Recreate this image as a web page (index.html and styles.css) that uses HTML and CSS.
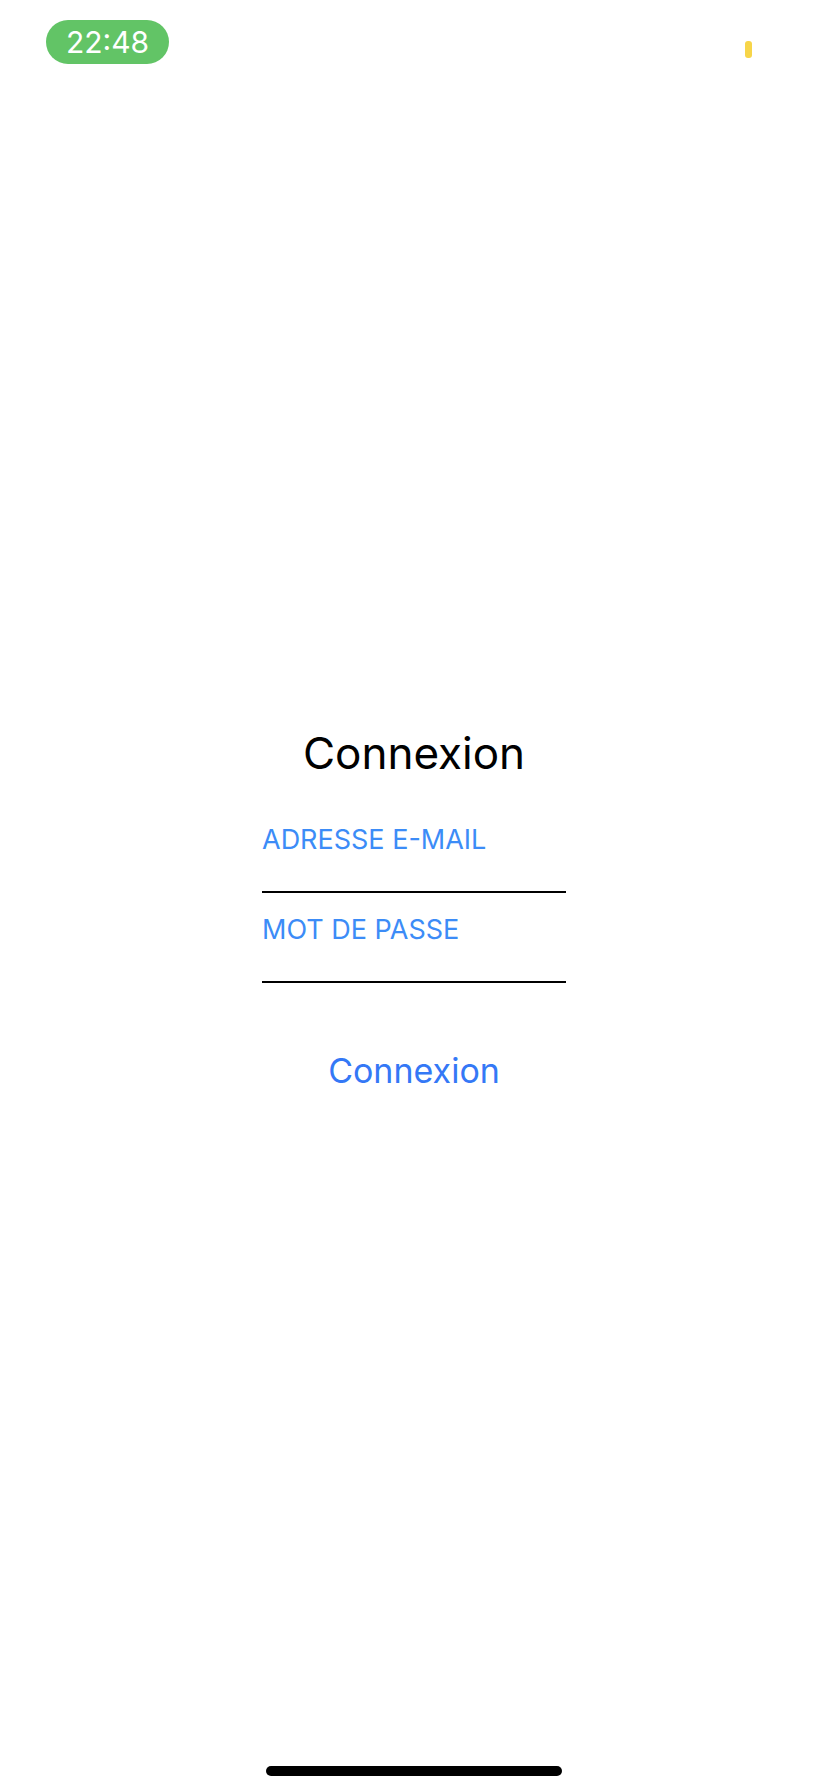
FILE: index.html
```html
<!DOCTYPE html>
<html lang="fr">
<head>
<meta charset="utf-8">
<meta name="viewport" content="width=device-width, initial-scale=1">
<title>Connexion</title>
<link rel="stylesheet" href="styles.css">
</head>
<body>
<div class="screen">
  <header class="status">
    <time class="clock" datetime="22:48">22:48</time>
    <span class="battery"></span>
  </header>
  <main class="content">
    <form class="login">
      <h1 class="title">Connexion</h1>
      <div class="field">
        <label class="label" for="email">ADRESSE E-MAIL</label>
        <input class="input" id="email" type="email">
      </div>
      <div class="field">
        <label class="label" for="password">MOT DE PASSE</label>
        <input class="input" id="password" type="password">
      </div>
      <button class="submit" type="submit">Connexion</button>
    </form>
  </main>
  <footer class="footer"><span class="home-bar"></span></footer>
</div>
</body>
</html>
```
FILE: styles.css
```css
* {
  box-sizing: border-box;
}

body {
  margin: 0;
  background: #fff;
  color: #000;
  font-family: Inter, "Liberation Sans", sans-serif;
}

.screen {
  display: flex;
  flex-direction: column;
  min-height: 100vh;
}

.status {
  display: flex;
  justify-content: space-between;
  align-items: flex-start;
  height: 94px;
  padding: 20px 76px 0 46px;
}

.clock {
  padding: 0 20px;
  border-radius: 22px;
  background: #62c466;
  color: #fff;
  font-size: 30px;
  line-height: 44px;
}

.battery {
  width: 7px;
  height: 17px;
  margin-top: 21px;
  border-radius: 3px;
  background: #f7d549;
}

.content {
  display: flex;
  flex: 1;
  align-items: center;
  justify-content: center;
}

.login {
  display: flex;
  flex-direction: column;
  align-items: center;
  width: 304px;
}

.title {
  margin: 0 0 40px;
  font-size: 44px;
  font-weight: 400;
  line-height: 56px;
}

.field {
  display: flex;
  flex-direction: column;
  width: 100%;
  padding-bottom: 18px;
}

.label {
  color: #3c8cf7;
  font-size: 27px;
  line-height: 38px;
}

.input {
  width: 100%;
  height: 34px;
  padding: 0;
  border: 0;
  border-bottom: 2px solid #000;
  border-radius: 0;
  outline: 0;
  background: transparent;
  font: inherit;
  font-size: 27px;
}

.submit {
  margin-top: 48px;
  padding: 0;
  border: 0;
  background: transparent;
  color: #3478f6;
  font: inherit;
  font-size: 34px;
  line-height: 44px;
}

.footer {
  display: flex;
  justify-content: center;
  align-items: flex-end;
  height: 68px;
  padding-bottom: 16px;
}

.home-bar {
  width: 296px;
  height: 10px;
  border-radius: 5px;
  background: #000;
}
```
